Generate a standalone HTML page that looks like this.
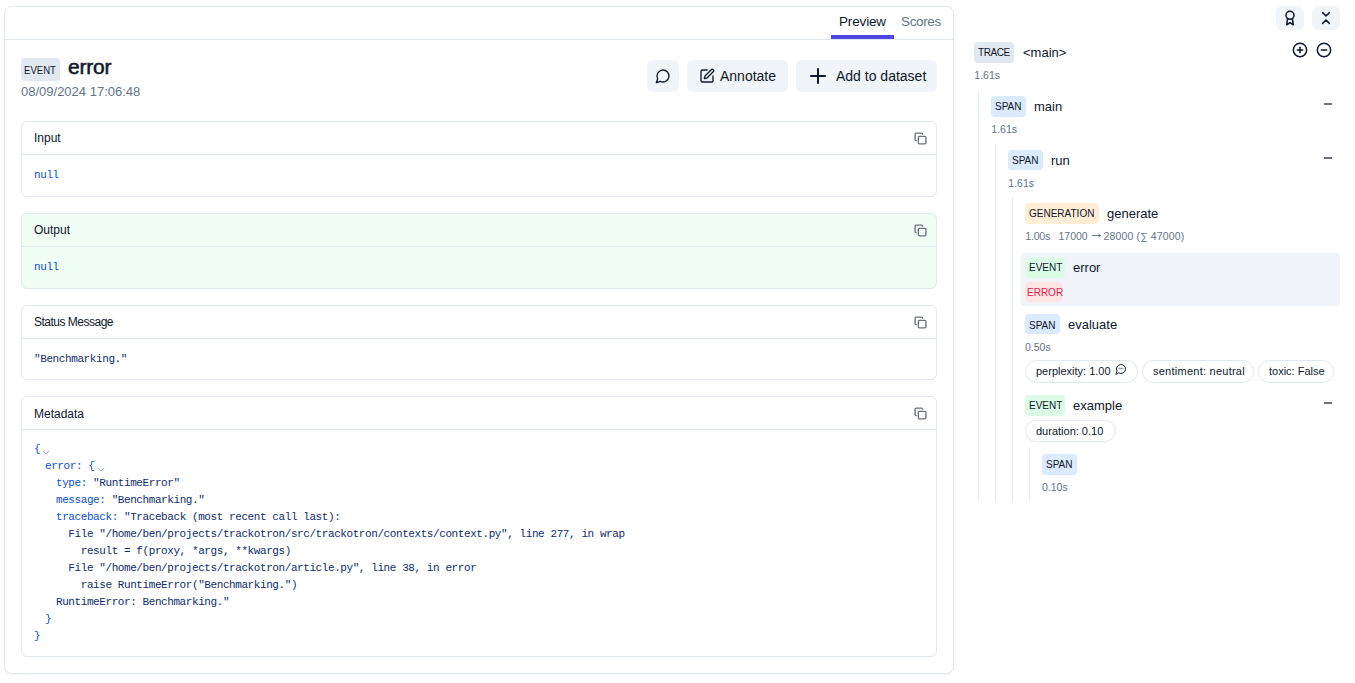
<!DOCTYPE html>
<html><head><meta charset="utf-8">
<style>
*{box-sizing:border-box;margin:0;padding:0}
html,body{width:1355px;height:683px;overflow:hidden;background:#fff;font-family:"Liberation Sans",sans-serif;color:#0f172a}
.a{position:absolute}
.t{position:absolute;white-space:nowrap;line-height:1}
svg{position:absolute;fill:none;stroke-linecap:round;stroke-linejoin:round}
.card{position:absolute;left:4px;top:6px;width:950px;height:668px;border:1px solid #e2e8f0;border-radius:8px;box-shadow:0 1px 2px rgba(0,0,0,.05);background:#fff}
.tabs{position:absolute;left:0;top:0;width:948px;height:33px;border-bottom:1px solid #e2e8f0}
.uline{position:absolute;left:826px;top:28px;width:63px;height:4px;background:#4f46e5}
.btn{position:absolute;height:32px;border-radius:6px;background:#f1f5f9}
.box{position:absolute;width:916px;border:1px solid #e2e8f0;border-radius:6px;background:#fff}
.box .hd{position:absolute;left:0;top:0;width:914px;height:33px;border-bottom:1px solid #e2e8f0}
.box .lbl{position:absolute;left:12px;top:10px;font-size:12px;line-height:1;white-space:nowrap}
.mono{font-family:"Liberation Mono",monospace;font-size:11px;letter-spacing:-0.4px}
.copy{left:891.6px;top:9.6px;width:13px;height:13px;stroke:#6b7280;stroke-width:2.5}
.badge{position:absolute;height:21px;border-radius:4px}
.dur{position:absolute;white-space:nowrap;line-height:1;color:#64748b;font-size:10.5px}
.nm{position:absolute;white-space:nowrap;line-height:1;font-size:13px;color:#0f172a}
.bt{position:absolute;white-space:nowrap;line-height:1;font-size:10px;color:#0f172a}
.vl{position:absolute;width:1px;background:#e2e8f0;bottom:181px}
.pill{position:absolute;height:23px;border:1px solid #e2e8f0;border-radius:12px}
.pt{position:absolute;white-space:nowrap;line-height:1;font-size:11px;color:#0f172a}
.minus{position:absolute;width:8px;height:2px;background:#6b7280;left:1324px}
.jl{position:absolute;font-family:"Liberation Mono",monospace;font-size:11px;letter-spacing:-0.42px;line-height:17px;height:17px;white-space:pre;color:#0f2d6b}
.k{color:#0a4fd6}
.chev{stroke:#9fb0d0;stroke-width:1}
</style></head><body>

<div class="card">
  <div class="tabs">
    <div class="t" style="left:834px;top:8px;font-size:13.5px;color:#0f172a;letter-spacing:-0.15px">Preview</div>
    <div class="t" style="left:896px;top:8px;font-size:13.5px;color:#64748b;letter-spacing:-0.35px">Scores</div>
    <div class="uline"></div>
  </div>
</div>

<!-- header -->
<div class="badge" style="left:21px;top:58px;width:39px;height:23px;background:#e2e8f0"></div>
<div class="t" style="left:24.3px;top:65px;font-size:11px;transform:scaleX(0.87);transform-origin:0 0">EVENT</div>
<div class="t" style="left:68px;top:56px;font-size:21px;font-weight:400;-webkit-text-stroke:0.55px #0f172a;letter-spacing:-0.2px">error</div>
<div class="t" style="left:21px;top:85px;font-size:13px;color:#64748b">08/09/2024 17:06:48</div>

<div class="btn" style="left:647px;top:60px;width:32px"></div>
<div class="btn" style="left:687px;top:60px;width:101px"></div>
<div class="btn" style="left:796px;top:60px;width:141px"></div>
<!-- message-circle -->
<svg style="left:655px;top:68px;stroke:#0f172a;stroke-width:2" width="16" height="16" viewBox="0 0 24 24"><path d="M7.9 20A9 9 0 1 0 4 16.1L2 22Z"/></svg>
<!-- square-pen -->
<svg style="left:699px;top:68px;stroke:#0f172a;stroke-width:2" width="16" height="16" viewBox="0 0 24 24"><path d="M12 3H5a2 2 0 0 0-2 2v14a2 2 0 0 0 2 2h14a2 2 0 0 0 2-2v-7"/><path d="M18.375 2.625a1 1 0 0 1 3 3l-9.013 9.014a2 2 0 0 1-.853.505l-2.873.84a.5.5 0 0 1-.62-.62l.84-2.873a2 2 0 0 1 .506-.852z"/></svg>
<!-- plus -->
<svg style="left:806px;top:64px;stroke:#0f172a;stroke-width:2" width="24" height="24" viewBox="0 0 24 24"><path d="M5 12h14"/><path d="M12 5v14"/></svg>
<div class="t" style="left:720px;top:69px;font-size:14px">Annotate</div>
<div class="t" style="left:836px;top:69px;font-size:14px">Add to dataset</div>

<!-- boxes -->
<div class="box" style="left:21px;top:121px;height:76px">
  <div class="hd"></div>
  <div class="lbl">Input</div>
  <svg class="copy" viewBox="0 0 24 24"><rect width="14" height="14" x="8" y="8" rx="2" ry="2"/><path d="M4 16c-1.1 0-2-.9-2-2V4c0-1.1.9-2 2-2h10c1.1 0 2 .9 2 2"/></svg>
  <div class="t mono" style="left:12px;top:48px;color:#0a4fd6">null</div>
</div>
<div class="box" style="left:21px;top:213px;height:76px;background:#f0fdf4">
  <div class="hd"></div>
  <div class="lbl">Output</div>
  <svg class="copy" viewBox="0 0 24 24"><rect width="14" height="14" x="8" y="8" rx="2" ry="2"/><path d="M4 16c-1.1 0-2-.9-2-2V4c0-1.1.9-2 2-2h10c1.1 0 2 .9 2 2"/></svg>
  <div class="t mono" style="left:12px;top:48px;color:#0a4fd6">null</div>
</div>
<div class="box" style="left:21px;top:305px;height:75px">
  <div class="hd"></div>
  <div class="lbl" style="letter-spacing:-0.5px">Status Message</div>
  <svg class="copy" viewBox="0 0 24 24"><rect width="14" height="14" x="8" y="8" rx="2" ry="2"/><path d="M4 16c-1.1 0-2-.9-2-2V4c0-1.1.9-2 2-2h10c1.1 0 2 .9 2 2"/></svg>
  <div class="t mono" style="left:12px;top:48px;color:#0f2d6b">"Benchmarking."</div>
</div>
<div class="box" style="left:21px;top:396px;height:261px">
  <div class="hd"></div>
  <div class="lbl" style="top:11px">Metadata</div>
  <svg class="copy" viewBox="0 0 24 24"><rect width="14" height="14" x="8" y="8" rx="2" ry="2"/><path d="M4 16c-1.1 0-2-.9-2-2V4c0-1.1.9-2 2-2h10c1.1 0 2 .9 2 2"/></svg>
</div>
<div class="jl k" style="left:34px;top:441px">{<svg class="chev" style="left:8px;top:9px" width="8" height="5" viewBox="0 0 8 5"><path d="M1 1l3 3 3-3"/></svg></div>
<div class="jl" style="left:45px;top:458px"><span class="k">error: {</span><svg class="chev" style="left:52px;top:9px" width="8" height="5" viewBox="0 0 8 5"><path d="M1 1l3 3 3-3"/></svg></div>
<div class="jl" style="left:56px;top:475px"><span class="k">type: </span>"RuntimeError"</div>
<div class="jl" style="left:56px;top:492px"><span class="k">message: </span>"Benchmarking."</div>
<div class="jl" style="left:56px;top:509px"><span class="k">traceback: </span>"Traceback (most recent call last):</div>
<div class="jl" style="left:56px;top:526px">  File "/home/ben/projects/trackotron/src/trackotron/contexts/context.py", line 277, in wrap</div>
<div class="jl" style="left:56px;top:543px">    result = f(proxy, *args, **kwargs)</div>
<div class="jl" style="left:56px;top:560px">  File "/home/ben/projects/trackotron/article.py", line 38, in error</div>
<div class="jl" style="left:56px;top:577px">    raise RuntimeError("Benchmarking.")</div>
<div class="jl" style="left:56px;top:594px">RuntimeError: Benchmarking."</div>
<div class="jl k" style="left:45px;top:611px">}</div>
<div class="jl k" style="left:34px;top:628px">}</div>

<!-- right tree -->
<div class="btn" style="left:1276px;top:6px;width:28px;height:24px"></div>
<div class="btn" style="left:1312px;top:6px;width:28px;height:24px"></div>
<!-- award -->
<svg style="left:1282px;top:10px;stroke:#0f172a;stroke-width:2.3" width="16" height="16" viewBox="0 0 24 24"><path d="m15.477 12.89 1.515 8.526a.5.5 0 0 1-.81.47l-3.58-2.687a1 1 0 0 0-1.197 0l-3.586 2.686a.5.5 0 0 1-.81-.469l1.514-8.526"/><circle cx="12" cy="8" r="6"/></svg>
<!-- chevrons-down-up -->
<svg style="left:1318px;top:10px;stroke:#0f172a;stroke-width:2.3" width="16" height="16" viewBox="0 0 24 24"><path d="m7 20 5-5 5 5"/><path d="m7 4 5 5 5-5"/></svg>
<!-- circle-plus / minus -->
<svg style="left:1292px;top:42px;stroke:#0f172a;stroke-width:2.3" width="16" height="16" viewBox="0 0 24 24"><circle cx="12" cy="12" r="10"/><path d="M8 12h8"/><path d="M12 8v8"/></svg>
<svg style="left:1316px;top:42px;stroke:#0f172a;stroke-width:2.3" width="16" height="16" viewBox="0 0 24 24"><circle cx="12" cy="12" r="10"/><path d="M8 12h8"/></svg>

<div class="vl" style="left:978px;top:90px"></div>
<div class="vl" style="left:995px;top:144px"></div>
<div class="vl" style="left:1012px;top:197px"></div>
<div class="vl" style="left:1029px;top:448px"></div>

<div class="badge" style="left:974px;top:42px;width:40px;background:#e2e8f0"></div>
<div class="bt" style="left:978px;top:48px;letter-spacing:-0.4px">TRACE</div>
<div class="nm" style="left:1023px;top:46px">&lt;main&gt;</div>
<div class="dur" style="left:974.3px;top:70px">1.61s</div>

<div class="badge" style="left:991px;top:96px;width:35px;background:#dbeafe"></div>
<div class="bt" style="left:995px;top:102px">SPAN</div>
<div class="nm" style="left:1034px;top:100px">main</div>
<div class="dur" style="left:991.3px;top:124px">1.61s</div>
<div class="minus" style="top:103px"></div>

<div class="badge" style="left:1008px;top:150px;width:35px;height:20px;background:#dbeafe"></div>
<div class="bt" style="left:1012px;top:156px">SPAN</div>
<div class="nm" style="left:1051px;top:154px">run</div>
<div class="dur" style="left:1008.3px;top:178px">1.61s</div>
<div class="minus" style="top:157px"></div>

<div class="badge" style="left:1025px;top:203px;width:74px;background:#ffedd5"></div>
<div class="bt" style="left:1029px;top:209px">GENERATION</div>
<div class="nm" style="left:1107px;top:207px">generate</div>
<div class="dur" style="left:1025.3px;top:231px;letter-spacing:-0.2px">1.00s</div>
<div class="dur" style="left:1058.5px;top:231px">17000</div>
<svg style="left:1091px;top:232px;stroke:#64748b;stroke-width:1" width="11" height="8" viewBox="0 0 11 8"><path d="M1.5 3.5h8M7.8 2.2l1.7 1.3-1.7 1.3"/></svg>
<div class="dur" style="left:1103.5px;top:231px;letter-spacing:0.15px">28000 (∑ 47000)</div>

<div class="a" style="left:1021px;top:253px;width:319px;height:53px;background:#f1f5f9;border-radius:4px"></div>
<div class="badge" style="left:1025px;top:257px;width:40px;background:#dcfce7"></div>
<div class="bt" style="left:1029px;top:263px">EVENT</div>
<div class="nm" style="left:1073px;top:261px">error</div>
<div class="badge" style="left:1025px;top:282px;width:38px;height:20px;background:#ffe4e6"></div>
<div class="bt" style="left:1027px;top:288px;color:#e11d48">ERROR</div>

<div class="badge" style="left:1025px;top:314px;width:35px;height:20px;background:#dbeafe"></div>
<div class="bt" style="left:1029px;top:321px">SPAN</div>
<div class="nm" style="left:1068px;top:318px">evaluate</div>
<div class="dur" style="left:1025px;top:342px">0.50s</div>

<div class="pill" style="left:1025px;top:360px;width:113px"></div>
<div class="pt" style="left:1036px;top:366px">perplexity: 1.00</div>
<svg style="left:1115px;top:363px;stroke:#0f172a;stroke-width:2" width="12" height="12" viewBox="0 0 24 24"><path d="M7.9 20A9 9 0 1 0 4 16.1L2 22Z"/><path d="M8 11h8" stroke="#9ca3af" stroke-width="3"/></svg>
<div class="pill" style="left:1142px;top:360px;width:112px"></div>
<div class="pt" style="left:1153px;top:366px;letter-spacing:0.25px">sentiment: neutral</div>
<div class="pill" style="left:1258px;top:360px;width:76px"></div>
<div class="pt" style="left:1269px;top:366px">toxic: False</div>

<div class="badge" style="left:1025px;top:395px;width:40px;background:#dcfce7"></div>
<div class="bt" style="left:1029px;top:401px">EVENT</div>
<div class="nm" style="left:1073px;top:399px">example</div>
<div class="minus" style="top:402px"></div>
<div class="pill" style="left:1025px;top:420px;width:91px;height:22px"></div>
<div class="pt" style="left:1036px;top:426px">duration: 0.10</div>

<div class="badge" style="left:1042px;top:454px;width:35px;background:#dbeafe"></div>
<div class="bt" style="left:1046px;top:460px">SPAN</div>
<div class="dur" style="left:1042px;top:482px">0.10s</div>

</body></html>
